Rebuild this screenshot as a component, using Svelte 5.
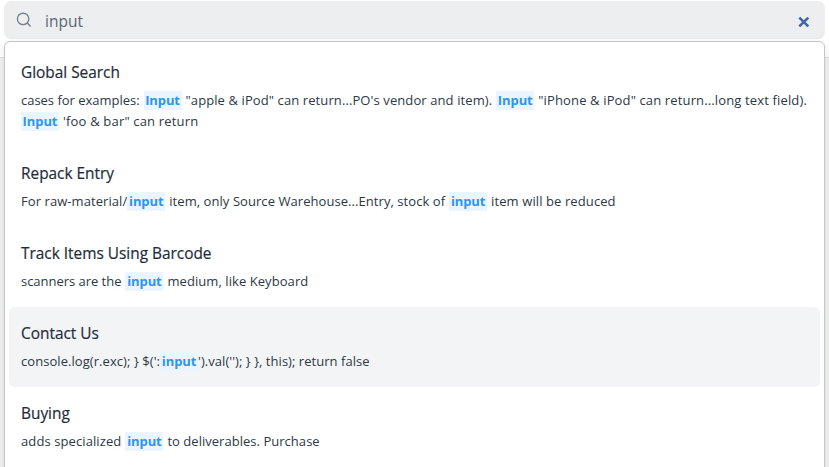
<script>
  const results = [
    {
      title: 'Global Search',
      lines: [
        [
          { t: 'cases for examples:', ls: -0.02 },
          { t: 'Input', hit: true },
          { t: '"apple & iPod" can return...PO\'s vendor and item).', ls: 0.1 },
          { t: 'Input', hit: true },
          { t: '"iPhone & iPod" can return...long text field).', ls: 0.14 }
        ],
        [{ t: 'Input', hit: true }, { t: '\'foo & bar" can return', ls: 0.18 }]
      ]
    },
    {
      title: 'Repack Entry',
      lines: [[
        { t: 'For raw-material/', ls: 0.07, tight: true },
        { t: 'input', hit: true },
        { t: 'item, only Source Warehouse...Entry, stock of', ls: 0.06 },
        { t: 'input', hit: true },
        { t: 'item will be reduced', ls: 0.1 }
      ]]
    },
    {
      title: 'Track Items Using Barcode',
      lines: [[
        { t: 'scanners are the', ls: -0.03 },
        { t: 'input', hit: true },
        { t: 'medium, like Keyboard', ls: 0.07 }
      ]]
    },
    {
      title: 'Contact Us',
      active: true,
      lines: [[
        { t: "console.log(r.exc); } $(':", ls: 0.06, tight: true },
        { t: 'input', hit: true, tight: true },
        { t: "').val(''); } }, this); return false", ls: 0.04 }
      ]]
    },
    {
      title: 'Buying',
      lines: [[
        { t: 'adds specialized', ls: 0.1 },
        { t: 'input', hit: true },
        { t: 'to deliverables. Purchase', ls: 0.03 }
      ]]
    }
  ];
</script>

<div class="page">
  <div class="search">
    <svg class="glass" width="16" height="16" viewBox="0 0 16 16" fill="none" stroke="#74808b" stroke-width="1.4" stroke-linecap="round">
      <circle cx="7.1" cy="6.9" r="5.7" />
      <path d="M11.3 11.1 14.2 13.9" />
    </svg>
    <span class="query">input</span>
    <svg class="clear" width="12" height="12" viewBox="0 0 12 12" stroke="#3f66ab" stroke-width="2.6">
      <path d="M1.3 1.6 10.3 10.4M10.3 1.6 1.3 10.4" />
    </svg>
  </div>
  <div class="menu">
    {#each results as r}
      <div class="item" class:active={r.active}>
        <div class="title">{r.title}</div>
        {#each r.lines as line}
          <div class="line">
            {#each line as s}
              {#if s.hit}<mark class:tight={s.tight}>{s.t}</mark>{:else}<span class:tight={s.tight} style="letter-spacing:{s.ls}px">{s.t}</span>{/if}
            {/each}
          </div>
        {/each}
      </div>
    {/each}
  </div>
</div>

<style>
  :global(body) { background: #f2f2f3; }
  .page {
    box-sizing: border-box;
    height: 467px;
    padding: 1px 8px 0 4px;
    overflow: hidden;
    background: linear-gradient(#fff 0 57px, #dedfe1 57px 58px, #f2f2f2 58px);
    font-family: "Open Sans", "Noto Sans", sans-serif;
    color: #1f2d3a;
  }
  .search {
    display: flex;
    align-items: center;
    width: 821px;
    height: 38px;
    box-sizing: border-box;
    padding: 0 15px 0 12px;
    border-radius: 7px;
    background: #edeef0;
  }
  .query { margin: 2px 0 0 13px; flex: 1; font-size: 15.5px; line-height: 20px; color: #5b6873; }
  .clear { margin-top: 3px; }
  .menu {
    box-sizing: border-box;
    width: 821px;
    height: 480px;
    margin-top: 2px;
    padding: 4px;
    border: 1px solid #c5c6c8;
    border-radius: 6px;
    background: #fff;
    box-shadow: 0 2px 8px rgba(0, 0, 0, 0.1);
  }
  .item { box-sizing: border-box; padding: 16px 12px 15px; border-radius: 6px; }
  .active { background: #f3f4f6; }
  .title {
    height: 28px;
    font-size: 15.4px;
    line-height: 22px;
    white-space: nowrap;
    -webkit-text-stroke: 0.2px #1f2d3a;
  }
  .line { display: flex; align-items: center; height: 21px; font-size: 13px; line-height: 19px; white-space: pre; color: #2c3945; }
  .line span { flex: none; margin-right: 4px; }
  mark {
    flex: none;
    box-sizing: border-box;
    width: 38px;
    height: 19px;
    margin-right: 4px;
    background: #ebf5ff;
    color: #2d95f0;
    font-weight: 700;
    letter-spacing: -0.1px;
    text-align: center;
  }
  .line .tight { margin-right: 0; }
</style>
